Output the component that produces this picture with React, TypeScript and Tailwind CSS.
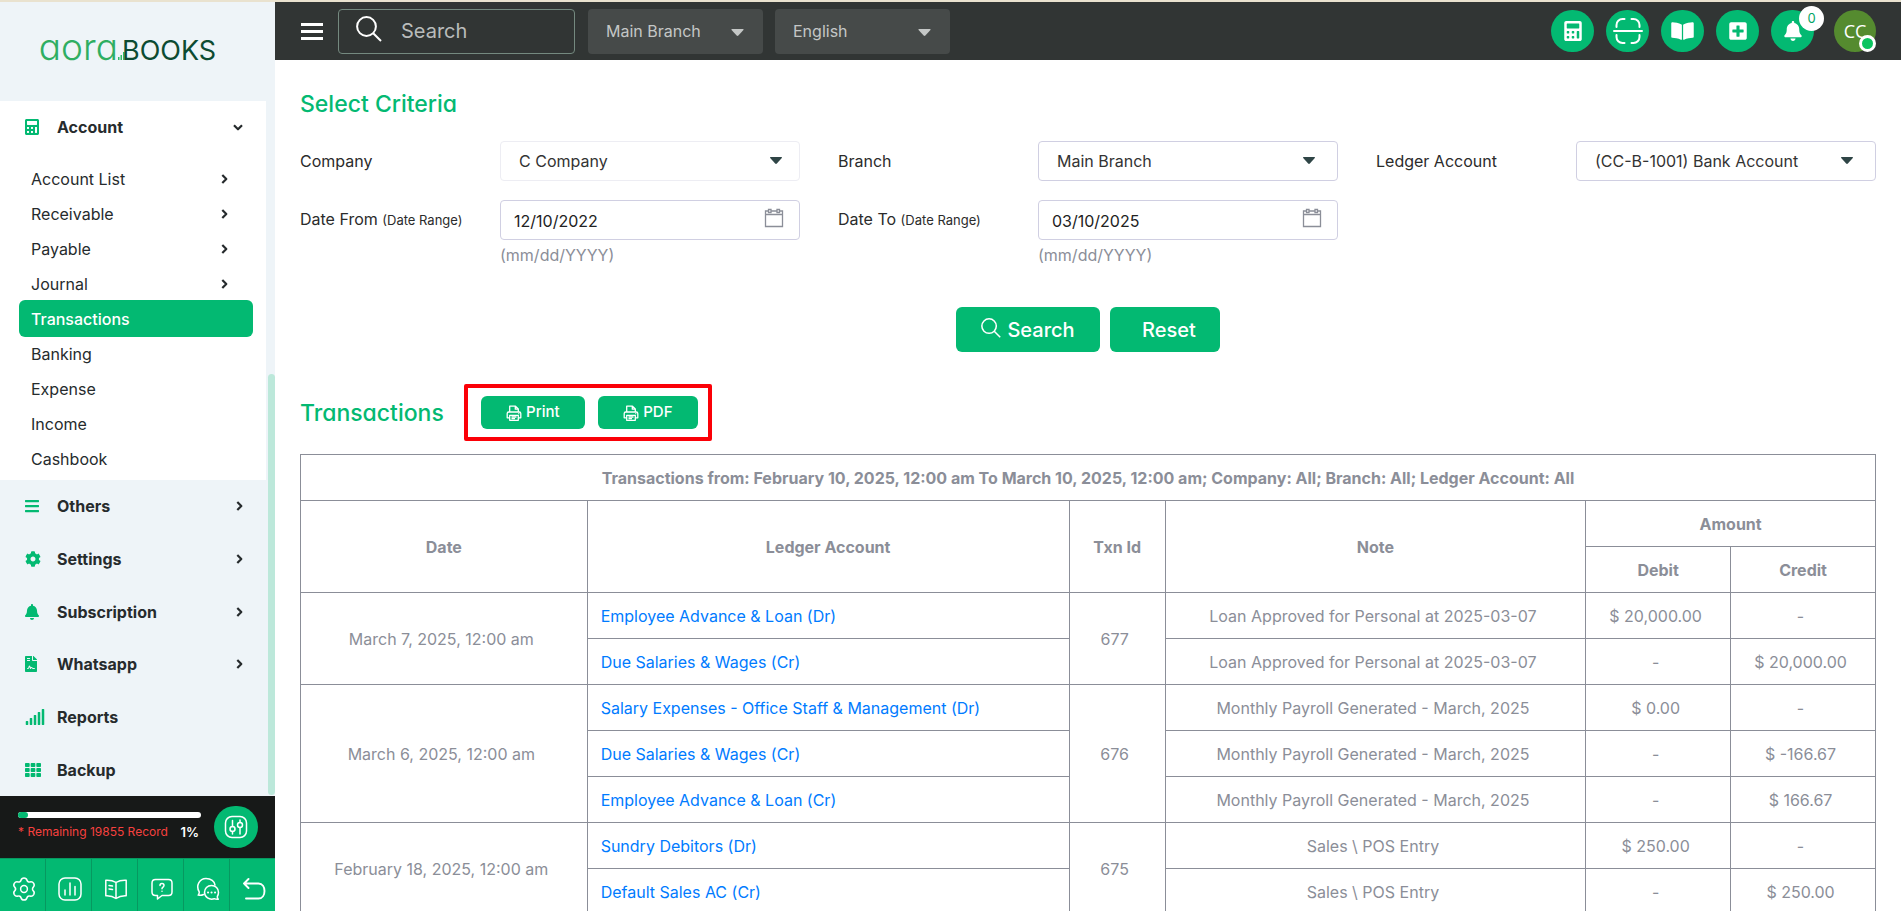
import { useState } from "react";
import type { ReactNode } from "react";
import {
  FaBars,
  FaBell,
  FaBookOpen,
  FaCalculator,
  FaCog,
  FaFileContract,
  FaPlusSquare,
  FaSignal,
  FaTh,
} from "react-icons/fa";

type Line = { account: string; note: string; debit: string; credit: string };
type Transaction = { id: number; date: string; lines: Line[] };

const accountItems = [
  { name: "Account List", more: true },
  { name: "Receivable", more: true },
  { name: "Payable", more: true },
  { name: "Journal", more: true },
  { name: "Transactions", more: false },
  { name: "Banking", more: false },
  { name: "Expense", more: false },
  { name: "Income", more: false },
  { name: "Cashbook", more: false },
];

const menuItems = [
  { name: "Others", icon: <FaBars className="h-4 w-3.5" />, more: true },
  { name: "Settings", icon: <FaCog className="h-4 w-4" />, more: true },
  { name: "Subscription", icon: <FaBell className="h-4 w-3.5" />, more: true },
  { name: "Whatsapp", icon: <FaFileContract className="h-4 w-3" />, more: true },
  { name: "Reports", icon: <FaSignal className="h-4 w-5" />, more: false },
  { name: "Backup", icon: <FaTh className="h-4 w-4" />, more: false },
];

const transactions: Transaction[] = [
  {
    id: 677,
    date: "March 7, 2025, 12:00 am",
    lines: [
      { account: "Employee Advance & Loan (Dr)", note: "Loan Approved for Personal at 2025-03-07", debit: "$ 20,000.00", credit: "-" },
      { account: "Due Salaries & Wages (Cr)", note: "Loan Approved for Personal at 2025-03-07", debit: "-", credit: "$ 20,000.00" },
    ],
  },
  {
    id: 676,
    date: "March 6, 2025, 12:00 am",
    lines: [
      { account: "Salary Expenses - Office Staff & Management (Dr)", note: "Monthly Payroll Generated - March, 2025", debit: "$ 0.00", credit: "-" },
      { account: "Due Salaries & Wages (Cr)", note: "Monthly Payroll Generated - March, 2025", debit: "-", credit: "$ -166.67" },
      { account: "Employee Advance & Loan (Cr)", note: "Monthly Payroll Generated - March, 2025", debit: "-", credit: "$ 166.67" },
    ],
  },
  {
    id: 675,
    date: "February 18, 2025, 12:00 am",
    lines: [
      { account: "Sundry Debitors (Dr)", note: "Sales \\ POS Entry", debit: "$ 250.00", credit: "-" },
      { account: "Default Sales AC (Cr)", note: "Sales \\ POS Entry", debit: "-", credit: "$ 250.00" },
    ],
  },
];

function SearchIcon({ className }: { className: string }) {
  return (
    <svg className={className} viewBox="0 0 26 26" fill="none" stroke="currentColor" strokeWidth="2">
      <circle cx="10.5" cy="10.5" r="9.4" />
      <path d="M17.2 17.2 25 25" />
    </svg>
  );
}

function Chevron({ down }: { down?: boolean }) {
  return (
    <svg className={`h-2.5 w-2.5 ${down ? "rotate-90" : ""}`} viewBox="0 0 10 10" fill="none" stroke="currentColor" strokeWidth="2.2" strokeLinejoin="round">
      <path d="M3.300 1 7.300 5l-4 4" />
    </svg>
  );
}

function Caret({ className }: { className: string }) {
  return (
    <svg className={className} viewBox="0 0 14 8" fill="currentColor">
      <path d="M.6 0h12.8c.5 0 .7.6.4 1L8 7.5c-.6.6-1.400.6-2 0L.2 1C-.1.6.1 0 .6 0z" />
    </svg>
  );
}

function PrinterIcon() {
  return (
    <svg className="h-4 w-4" viewBox="0 0 16 16" fill="none" stroke="currentColor" strokeWidth="1.300" strokeLinejoin="round">
      <path d="M3.700 7V1.200h5.800l2.800 2.800v3M9.300 1.200v3h3" />
      <path d="M3.700 12.800H1.200V8.500c0-.9.6-1.500 1.500-1.500h10.600c.9 0 1.500.6 1.500 1.500v4.300h-2.500" />
      <path d="M3.700 10.300h8.600v5H3.700zM5.500 12h5M5.500 13.700h3.500" />
      <path d="M12.300 8.700h1" />
    </svg>
  );
}

function CalendarIcon() {
  return (
    <svg className="pointer-events-none absolute right-4 top-2 h-5 w-5" viewBox="0 0 20 20" fill="none" stroke="#8b8e98" strokeWidth="1.300">
      <path d="M1.500 3h17v15.500h-17zM1.500 6.500h17" />
      <path d="M4.500 1.500h2.500v3H4.500zM13 1.500h2.500v3H13z" fill="#fff" />
    </svg>
  );
}

function Logo() {
  return (
    <a href="#" aria-label="aorabooks" className="flex items-baseline leading-8 [font-feature-settings:'cv11']">
      <span className="text-[37px] font-light text-[#2fae62]">aora</span>
      <svg className="-mr-1 h-3 w-2 text-[#2fb968]" viewBox="0 0 8 12" fill="currentColor">
        <path d="M0 9h1.500v3H0zM2.500 7H4v5H2.500zM5 4h1.500v8H5z" />
      </svg>
      <span className="text-[27px] font-normal text-[#0c4b32]">BOOKS</span>
    </a>
  );
}

function SelectField({ id, label, value, soft }: { id: string; label: string; value: string; soft?: boolean }) {
  return (
    <div className="flex">
      <label htmlFor={id} className="w-2/5 pt-2 leading-6 text-[#2b2b2b]">{label}</label>
      <div className="relative w-3/5">
        <select
          id={id}
          className={`h-10 w-full appearance-none rounded border bg-white pl-[18px] pr-10 text-[#333] outline-none ${soft ? "border-[#ededf3]" : "border-[#d0cfe2]"}`}
        >
          <option>{value}</option>
        </select>
        <Caret className={`pointer-events-none absolute top-4 h-[7px] w-3 text-[#2f4546] ${soft ? "right-[18px]" : "right-[23px]"}`} />
      </div>
    </div>
  );
}

function DateField({ id, label, initial }: { id: string; label: string; initial: string }) {
  const [value, setValue] = useState(initial);
  return (
    <div className="flex">
      <label htmlFor={id} className="w-2/5 pt-[7px] leading-6 text-[#2b2b2b]">
        {label} <span className="text-[13px]">(Date Range)</span>
      </label>
      <div className="relative w-3/5">
        <input
          id={id}
          type="text"
          value={value}
          onChange={(e) => setValue(e.target.value)}
          className="h-10 w-full rounded border border-[#d0cfe2] pl-[13px] pr-12 pt-px text-[#222] outline-none"
        />
        <CalendarIcon />
        <p className="mt-[3px] leading-6 text-[#8b8e98]">(mm/dd/YYYY)</p>
      </div>
    </div>
  );
}

function RoundButton({ label, children }: { label: string; children: ReactNode }) {
  return (
    <button aria-label={label} className="relative flex h-[42px] w-[43px] items-center justify-center rounded-full bg-[#03b972] text-xl text-white">
      {children}
    </button>
  );
}

function ToolbarIcon({ children }: { children: ReactNode }) {
  return (
    <svg className="h-6 w-6" viewBox="0 0 24 24" fill="none" stroke="currentColor" strokeWidth="1.500" strokeLinecap="round" strokeLinejoin="round">
      {children}
    </svg>
  );
}

const toolbar = [
  {
    name: "Preferences",
    icon: (
      <ToolbarIcon>
        <path d="M12 1c1.800 0 2.600.8 3 2.300.4 1.400 1.700 2 3 1.600 1.600-.4 2.800 0 3.700 1.500.9 1.600.7 2.700-.4 3.700-1.100 1.100-1.100 2.700 0 3.800 1.100 1 1.300 2.100.4 3.700-.9 1.500-2.100 1.900-3.700 1.500-1.300-.4-2.600.2-3 1.600-.4 1.500-1.200 2.300-3 2.300s-2.600-.8-3-2.300c-.4-1.400-1.700-2-3-1.600-1.600.4-2.800 0-3.700-1.500-.9-1.600-.7-2.700.4-3.700 1.100-1.100 1.100-2.700 0-3.800-1.100-1-1.300-2.100-.4-3.700C3.200 4.900 4.400 4.500 6 4.900c1.300.4 2.600-.2 3-1.600C9.400 1.800 10.200 1 12 1z" />
        <circle cx="12" cy="12" r="3.400" />
      </ToolbarIcon>
    ),
  },
  {
    name: "Reports chart",
    icon: (
      <ToolbarIcon>
        <rect x="1" y="1" width="22" height="22" rx="6" />
        <path d="M7 13v5M12 6v12M17 9.500V18" />
      </ToolbarIcon>
    ),
  },
  {
    name: "Guide",
    icon: (
      <ToolbarIcon>
        <path d="M12 5.500C9 3.500 5.500 3 1.800 3.200v15.600c3.700-.2 7.200.5 10.200 2.700 3-2.200 6.500-2.900 10.200-2.700V3.200C18.500 3 15 3.500 12 5.500zM12 5.500v16M5 8.500l3.500.6M5 12l3.500.6" />
      </ToolbarIcon>
    ),
  },
  {
    name: "Help",
    icon: (
      <ToolbarIcon>
        <path d="M5.500 2.500h13c2 0 3.500 1.500 3.500 3.500v9c0 2-1.500 3.500-3.500 3.500H12l-4.500 3.500v-3.500h-2c-2 0-3.500-1.500-3.500-3.500V6c0-2 1.500-3.500 3.500-3.500z" />
        <path d="M10 8.500c0-2.700 4-2.700 4 0 0 1.600-2 1.500-2 3.200M12 14.200v.1" />
      </ToolbarIcon>
    ),
  },
  {
    name: "Chat",
    icon: (
      <ToolbarIcon>
        <path d="M7.500 17.500c-1.500.8-3.500 1-5.300.6.8-1 1.200-2 1-3.200C-.5 8.500 3.500 1.500 10 1.500c5 0 8.500 3 9 6.500" />
        <path d="M15.500 8.500c4.200 0 7 3 7 6.800 0 2-.6 3.300-1.200 4.200-.1 1.200.3 2 1 2.800-1.500.2-2.800 0-4-.6-5 1.600-9.800-1.700-9.800-6.400 0-3.800 2.800-6.800 7-6.800z" />
        <path d="M12 15.500h.1M15.500 15.500h.1M19 15.500h.1" strokeWidth="2" />
      </ToolbarIcon>
    ),
  },
  {
    name: "Back",
    icon: (
      <ToolbarIcon>
        <path d="M6.500 2 2 6.500 6.500 11M2 6.500h14.500c8 0 8 15 0 15H4" strokeWidth="1.900" />
      </ToolbarIcon>
    ),
  },
];

function Sidebar() {
  const [active, setActive] = useState("Transactions");
  return (
    <aside className="relative flex w-[275px] shrink-0 flex-col bg-[#eef4f8] text-[#262b2d]">
      <div className="flex h-[99px] items-center justify-center pr-5 pb-1.5">
        <Logo />
      </div>
      <div className="mr-[9px] bg-white pb-1">
        <button className="flex h-[52px] w-full items-center pl-[25px] pr-[23px] text-base font-bold">
          <span className="w-8 text-[#03b972]"><FaCalculator className="h-4 w-3.5" /></span>
          <span className="mr-auto">Account</span>
          <Chevron down />
        </button>
        <ul className="pt-2">
          {accountItems.map((item) => (
            <li key={item.name} className="flex h-[35px] items-center pl-[19px] pr-[13px]">
              <button
                onClick={() => setActive(item.name)}
                className={`flex h-[37px] w-full shrink-0 items-center justify-between rounded-md pl-3 pr-6 text-base ${
                  active === item.name ? "bg-[#03b972] font-medium text-white" : ""
                }`}
              >
                {item.name}
                {item.more && <Chevron />}
              </button>
            </li>
          ))}
        </ul>
      </div>
      <nav className="flex flex-1 flex-col">
        {menuItems.map((item) => (
          <button key={item.name} className="flex flex-1 items-center justify-between pl-[25px] pr-[31px] text-base font-bold">
            <span className="flex items-center">
              <span className="w-8 text-[#03b972]">{item.icon}</span>
              {item.name}
            </span>
            {item.more && <Chevron />}
          </button>
        ))}
      </nav>
      <div className="absolute bottom-[116px] right-0 top-[372px] w-[7px] rounded-full bg-[#bce8da]" />
      <div className="flex h-[62px] items-center justify-between bg-[#171918] pl-[18px] pr-[17px]">
        <div className="w-[183px]">
          <div className="h-1.5 rounded-full bg-white">
            <div className="h-1.5 w-2.5 rounded-full bg-[#03b972]" />
          </div>
          <div className="mt-1 flex items-center justify-between whitespace-nowrap pr-0.5 leading-5">
            <span className="text-xs text-[#f6413f]">* Remaining 19855 Record</span>
            <span className="text-[13px] font-semibold text-white">1%</span>
          </div>
        </div>
        <button aria-label="Adjust" className="flex h-[42px] w-11 items-center justify-center rounded-full bg-[#03b972] text-white">
          <ToolbarIcon>
            <rect x="1.500" y="1.500" width="21" height="21" rx="6.500" />
            <path d="M8.500 5.500v6M8.500 16.500v2.500M16 5v2.500M16 13v6" />
            <circle cx="8.500" cy="14" r="2.500" />
            <circle cx="16" cy="10" r="2.500" />
          </ToolbarIcon>
        </button>
      </div>
      <div className="flex h-[53px] border-t border-[#079860] bg-[#03b972] text-white">
        {toolbar.map((item) => (
          <button key={item.name} aria-label={item.name} className="flex flex-1 items-center justify-center border-r border-[#079860] pt-2 pl-0.5 last:border-r-0">
            {item.icon}
          </button>
        ))}
      </div>
    </aside>
  );
}

function HeaderSelect({ label, value }: { label: string; value: string }) {
  return (
    <div className="relative w-[175px]">
      <select aria-label={label} className="h-[45px] w-full appearance-none rounded bg-[#464a49] pl-[18px] pr-10 text-base text-[#c4c7c6] outline-none">
        <option>{value}</option>
      </select>
      <Caret className="pointer-events-none absolute right-[19px] top-5 h-[7px] w-[13px] text-[#c4c7c6]" />
    </div>
  );
}

function Header() {
  return (
    <header className="flex h-[58px] shrink-0 items-center bg-[#313534] pl-[26px] pr-[25px]">
      <button aria-label="Toggle menu" className="flex w-[22px] flex-col gap-1">
        <span className="h-[3px] bg-white" />
        <span className="h-[3px] bg-white" />
        <span className="h-[3px] bg-white" />
      </button>
      <div className="ml-[15px] flex h-[45px] w-[237px] items-center rounded border border-[#74897f] pl-[17px]">
        <SearchIcon className="mb-1 h-[26px] w-[26px] shrink-0 text-white" />
        <input
          type="search"
          aria-label="Search"
          placeholder="Search"
          className="ml-[19px] w-full min-w-0 bg-transparent text-xl text-white outline-none placeholder:text-[#b9bcbb]"
        />
      </div>
      <div className="ml-[13px] flex gap-3">
        <HeaderSelect label="Branch" value="Main Branch" />
        <HeaderSelect label="Language" value="English" />
      </div>
      <div className="ml-auto flex gap-3">
        <RoundButton label="Calculator"><FaCalculator /></RoundButton>
        <RoundButton label="Scan">
          <svg className="h-[30px] w-[30px]" viewBox="0 0 30 30" fill="none" stroke="currentColor" strokeWidth="2" strokeLinecap="round">
            <path d="M1 15h28M3.500 11v-2a6 6 0 0 1 6-6h2M18.500 3h2a6 6 0 0 1 6 6v2M3.500 19v2a6 6 0 0 0 6 6h2M18.500 27h2a6 6 0 0 0 6-6v-2" />
          </svg>
        </RoundButton>
        <RoundButton label="Ledger"><FaBookOpen className="h-5 w-[23px]" /></RoundButton>
        <RoundButton label="Add"><FaPlusSquare /></RoundButton>
        <RoundButton label="Notifications">
          <FaBell />
          <span className="absolute -right-2.5 -top-1 flex h-[25px] w-[25px] items-center justify-center rounded-full bg-white text-[13px] text-[#03a566]">0</span>
        </RoundButton>
      </div>
      <button aria-label="Profile" className="relative ml-5 flex h-[42px] w-[42px] items-center justify-center rounded-full bg-[#558b2f] font-['Open_Sans',sans-serif] text-lg text-white">
        CC
        <span className="absolute bottom-0 right-0 h-[17px] w-[17px] rounded-full border-3 border-white bg-[#0ac45f]" />
      </button>
    </header>
  );
}

const titleClass = "text-[23px] leading-8 font-medium text-[#03b972] [font-feature-settings:'cv11']";
const cell = "border border-[#8b8e98] pl-[13px] pr-[18px]";

export default function App() {
  return (
    <div className="flex h-screen overflow-hidden border-t-2 border-[#e9e2cf] bg-white font-['Inter',sans-serif] text-base">
      <Sidebar />
      <div className="flex min-w-0 flex-1 flex-col">
        <Header />
        <main className="flex-1 overflow-hidden px-[25px] pt-7">
          <h2 className={titleClass}>Select Criteria</h2>
          <form onSubmit={(e) => e.preventDefault()}>
            <div className="mt-[21px] grid grid-cols-3 gap-x-[38px] gap-y-[19px]">
              <SelectField id="company" label="Company" value="C Company" soft />
              <SelectField id="branch" label="Branch" value="Main Branch" />
              <SelectField id="ledger" label="Ledger Account" value="(CC-B-1001) Bank Account" />
              <DateField id="from" label="Date From" initial="12/10/2022" />
              <DateField id="to" label="Date To" initial="03/10/2025" />
            </div>
            <div className="mt-10 flex justify-center gap-2.5 text-xl font-medium text-white">
              <button type="submit" className="flex h-[45px] w-36 items-center justify-center gap-1.5 rounded-md bg-[#03b972]">
                <SearchIcon className="mb-1 h-5 w-5" />
                Search
              </button>
              <button type="reset" className="h-[45px] w-[110px] rounded-md bg-[#03b972] pl-2">Reset</button>
            </div>
          </form>
          <div className="mt-8 flex items-center">
            <h2 className={titleClass}>Transactions</h2>
            <div className="ml-5 flex h-[57px] items-center gap-[13px] rounded-xs border-4 border-[#fb0007] pl-[13px] pr-[10px] text-[15px] font-medium text-white">
              <button className="flex h-[33px] w-[104px] items-center justify-center gap-1 rounded-md bg-[#03b972]">
                <PrinterIcon />
                Print
              </button>
              <button className="flex h-[33px] w-[100px] items-center justify-center gap-1 rounded-md bg-[#03b972]">
                <PrinterIcon />
                PDF
              </button>
            </div>
          </div>
          <table className="mt-[13px] w-full table-fixed border-collapse text-center text-[#8b8e98]">
            <colgroup>
              <col className="w-[18.2%]" />
              <col className="w-[30.6%]" />
              <col className="w-[6.1%]" />
              <col className="w-[26.7%]" />
              <col className="w-[9.2%]" />
              <col className="w-[9.2%]" />
            </colgroup>
            <thead className="font-bold">
              <tr className="h-[46px]">
                <th colSpan={6} className="border border-[#8b8e98]">
                  Transactions from: February 10, 2025, 12:00 am To March 10, 2025, 12:00 am; Company: All; Branch: All; Ledger Account: All
                </th>
              </tr>
              <tr className="h-[46px]">
                <th rowSpan={2} className="border border-[#8b8e98]">Date</th>
                <th rowSpan={2} className="border border-[#8b8e98]">Ledger Account</th>
                <th rowSpan={2} className="border border-[#8b8e98]">Txn Id</th>
                <th rowSpan={2} className="border border-[#8b8e98]">Note</th>
                <th colSpan={2} className="border border-[#8b8e98]">Amount</th>
              </tr>
              <tr className="h-[46px]">
                <th className="border border-[#8b8e98]">Debit</th>
                <th className="border border-[#8b8e98]">Credit</th>
              </tr>
            </thead>
            <tbody>
              {transactions.map((txn) =>
                txn.lines.map((line, i) => (
                  <tr key={`${txn.id}-${i}`} className="h-[46px] whitespace-nowrap">
                    {i === 0 && <td rowSpan={txn.lines.length} className={cell}>{txn.date}</td>}
                    <td className={`${cell} text-left`}>
                      <a href="#" className="text-[#007bff]">{line.account}</a>
                    </td>
                    {i === 0 && <td rowSpan={txn.lines.length} className={cell}>{txn.id}</td>}
                    <td className={cell}>{line.note}</td>
                    <td className={cell}>{line.debit}</td>
                    <td className={cell}>{line.credit}</td>
                  </tr>
                ))
              )}
            </tbody>
          </table>
        </main>
      </div>
    </div>
  );
}
